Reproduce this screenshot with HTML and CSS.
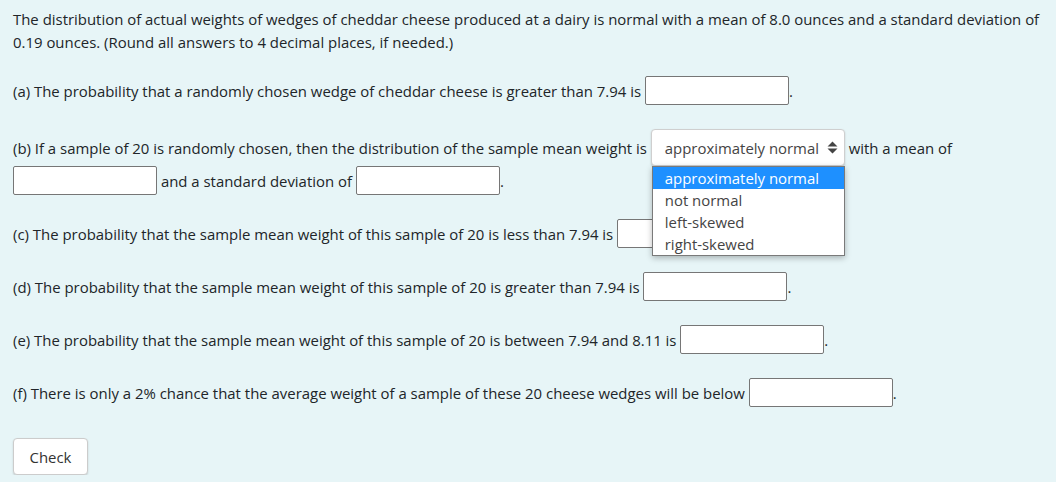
FILE: index.html
```html
<!DOCTYPE html>
<html lang="en">
<head>
<meta charset="utf-8">
<title>Sampling distribution question</title>
<link rel="stylesheet" href="styles.css">
</head>
<body>
<main class="question">
  <p class="intro">The distribution of actual weights of wedges of cheddar cheese produced at a dairy is normal with a mean of 8.0 ounces and a standard deviation of 0.19 ounces. (Round all answers to 4 decimal places, if needed.)</p>

  <p class="part">(a) The probability that a randomly chosen wedge of cheddar cheese is greater than 7.94 is <input class="answer" type="text">.</p>

  <p class="part">(b) If a sample of 20 is randomly chosen, then the distribution of the sample mean weight is <span class="select-wrap"><span class="select">approximately normal<svg class="sort-icon" width="11" height="13" viewBox="0 0 11 13"><path d="M5.5 0.5 L10.5 5.5 L0.5 5.5 Z M0.5 7.5 L10.5 7.5 L5.5 12.5 Z" fill="#444"/></svg></span><span class="options" role="listbox"><span class="option selected" role="option">approximately normal</span><span class="option" role="option">not normal</span><span class="option" role="option">left-skewed</span><span class="option" role="option">right-skewed</span></span></span> with a mean of <input class="answer" type="text"> and a standard deviation of <input class="answer" type="text">.</p>

  <p class="part">(c) The probability that the sample mean weight of this sample of 20 is less than 7.94 is <input class="answer" type="text">.</p>

  <p class="part">(d) The probability that the sample mean weight of this sample of 20 is greater than 7.94 is <input class="answer" type="text">.</p>

  <p class="part">(e) The probability that the sample mean weight of this sample of 20 is between 7.94 and 8.11 is <input class="answer" type="text">.</p>

  <p class="part">(f) There is only a 2% chance that the average weight of a sample of these 20 cheese wedges will be below <input class="answer" type="text">.</p>

  <div class="actions"><button class="check-btn" type="button">Check</button></div>
</main>
</body>
</html>
```
FILE: styles.css
```css
html, body {
  margin: 0;
  padding: 0;
  background: #e7f5f7;
}

body {
  font-family: "Open Sans", "Noto Sans", sans-serif;
  font-size: 14.93px;
  color: #212529;
}

.question {
  padding: 8px 12px 0 13px;
}

.intro {
  margin: 0 0 22px;
  line-height: 23px;
}

.part {
  margin: 0 0 24px;
  line-height: 25px;
}

.answer {
  box-sizing: border-box;
  width: 144px;
  height: 29px;
  margin: 0;
  padding: 0 6px;
  border: 1px solid #767676;
  border-radius: 2px;
  background: #fff;
  font: inherit;
  vertical-align: baseline;
}

.select-wrap {
  position: relative;
  display: inline-block;
  vertical-align: baseline;
}

.select {
  box-sizing: border-box;
  display: flex;
  align-items: center;
  justify-content: space-between;
  width: 194px;
  height: 37px;
  padding: 0 6px 0 13px;
  border: 1px solid #cfcfcf;
  border-radius: 4px;
  background: #fff;
  box-shadow: 0 1px 2px rgba(0, 0, 0, 0.18);
  color: #444;
  line-height: 20px;
}

.sort-icon {
  display: block;
}

.options {
  position: absolute;
  left: 1px;
  top: 37px;
  z-index: 2;
  display: block;
  box-sizing: border-box;
  width: 193px;
  background: #fff;
  border: 1px solid #7a7a7a;
  box-shadow: 0 2px 6px rgba(0, 0, 0, 0.28);
}

.option {
  display: block;
  height: 22px;
  padding-left: 12px;
  line-height: 22px;
  color: #444;
  white-space: nowrap;
}

.option.selected {
  background: #1e90ff;
  color: #fff;
}

.actions {
  margin-top: 31px;
}

.check-btn {
  box-sizing: border-box;
  width: 75px;
  height: 37px;
  padding: 0;
  border: 1px solid #cccccc;
  border-radius: 4px;
  background: #fff;
  box-shadow: 0 1px 2px rgba(0, 0, 0, 0.15);
  font: inherit;
  color: #333;
}
```
